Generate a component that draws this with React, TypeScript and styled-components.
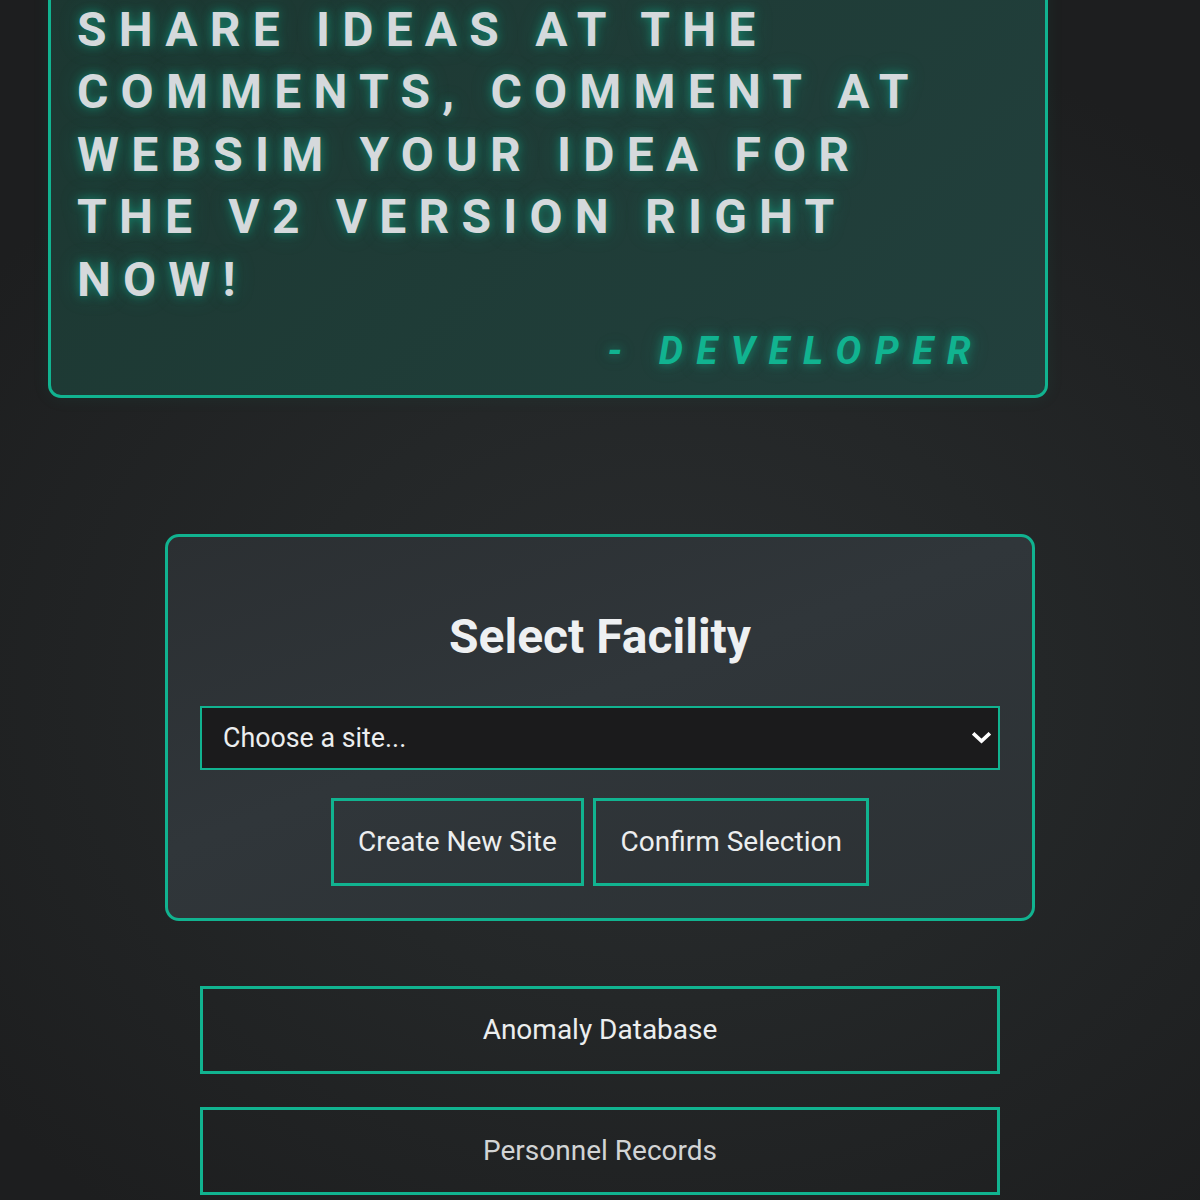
import React from "react";
import styled, { createGlobalStyle } from "styled-components";

const TEAL = "#11b390";

const Global = createGlobalStyle`
  html, body {
    margin: 0;
    padding: 0;
    background: #1f2122;
  }
  body {
    min-height: 1200px;
    font-family: Roboto, "Liberation Sans", Arial, sans-serif;
    color: #e8eaeb;
    background:
      radial-gradient(ellipse 70% 55% at 55% 55%, #2a2d2f 0%, #242728 45%, #1d1e1f 100%);
    overflow: hidden;
  }
  * { box-sizing: border-box; }
`;

const Page = styled.main`
  display: flex;
  flex-direction: column;
  align-items: center;
  padding: 0 48px 60px;
  margin-top: -30px;
`;

const QuoteCard = styled.section`
  align-self: flex-start;
  width: 1000px;
  border: 3.2px solid ${TEAL};
  border-radius: 13px;
  padding: 26px 26px 22px;
  background: linear-gradient(135deg, #1c3731 0%, #1f3c37 50%, #22403d 100%);
  box-shadow: 0 0 18px rgba(17, 179, 144, 0.08);
`;

const QuoteText = styled.p`
  margin: 0;
  font-family: Roboto, "Liberation Sans", sans-serif;
  font-weight: 700;
  font-size: 48px;
  line-height: 62.4px;
  letter-spacing: 12.2px;
  text-transform: uppercase;
  color: #d5d9dc;
  text-shadow: 0 0 10px rgba(17, 179, 144, 0.55), 0 0 22px rgba(17, 179, 144, 0.3);
  padding-right: 40px;
`;

const Signature = styled.p`
  margin: 17px 35px 0 0;
  text-align: right;
  font-family: Roboto, "Liberation Sans", sans-serif;
  font-weight: 700;
  font-style: italic;
  font-size: 38.4px;
  line-height: 45px;
  letter-spacing: 13.5px;
  text-transform: uppercase;
  color: ${TEAL};
  text-shadow: 0 0 10px rgba(17, 179, 144, 0.55), 0 0 20px rgba(17, 179, 144, 0.3);
`;

const FacilityCard = styled.section`
  margin-top: 136px;
  width: 870px;
  border: 3.2px solid ${TEAL};
  border-radius: 14px;
  padding: 32px;
  background: linear-gradient(160deg, #2b2f32 0%, #30363a 45%, #2c3134 100%);
  display: flex;
  flex-direction: column;
  align-items: stretch;
`;

const Title = styled.h2`
  margin: 39px 0 41px;
  text-align: center;
  font-family: Roboto, "Liberation Sans", sans-serif;
  font-weight: 700;
  font-size: 48px;
  line-height: normal;
  color: #eef0f2;
`;

const SelectWrap = styled.div`
  position: relative;
  width: 100%;
`;

const Select = styled.select`
  appearance: none;
  -webkit-appearance: none;
  width: 100%;
  height: 64px;
  margin: 0;
  padding: 0 50px 0 21px;
  border: 2.4px solid ${TEAL};
  border-radius: 0;
  background: #1b1b1c;
  color: #eceeef;
  font-family: Roboto, "Liberation Sans", sans-serif;
  font-size: 26.8px;
  outline: none;
`;

const Chevron = styled.svg`
  position: absolute;
  right: 9px;
  top: 50%;
  width: 19px;
  height: 12px;
  transform: translateY(-50%);
  pointer-events: none;
`;

const ButtonRow = styled.div`
  margin-top: 28px;
  display: flex;
  justify-content: center;
  gap: 9px;
`;

const OutlineButton = styled.button<{ $wide?: boolean; $dim?: boolean }>`
  display: block;
  width: ${(p) => (p.$wide ? "800px" : "auto")};
  margin: 0;
  padding: 26px 24.4px;
  border: 3.6px solid ${TEAL};
  border-radius: 0;
  background: transparent;
  color: ${(p) => (p.$dim ? "#d2d4d5" : "#eceeef")};
  font-family: Roboto, "Liberation Sans", sans-serif;
  font-size: 28px;
  line-height: 30px;
  text-align: center;
  cursor: pointer;
`;

const NavList = styled.nav`
  margin-top: 65px;
  display: flex;
  flex-direction: column;
  gap: 32.5px;
`;

export default function App() {
  return (
    <>
      <Global />
      <Page>
        <QuoteCard>
          <QuoteText>
            Share ideas at the comments, comment at websim your idea for the v2 version right now!
          </QuoteText>
          <Signature>- Developer</Signature>
        </QuoteCard>

        <FacilityCard>
          <Title>Select Facility</Title>
          <SelectWrap>
            <Select defaultValue="">
              <option value="">Choose a site...</option>
            </Select>
            <Chevron viewBox="0 0 19 12">
              <path d="M2.5 2.5 L9.5 9 L16.5 2.5" fill="none" stroke="#ffffff" strokeWidth="3.6" strokeLinecap="square" />
            </Chevron>
          </SelectWrap>
          <ButtonRow>
            <OutlineButton>Create New Site</OutlineButton>
            <OutlineButton>Confirm Selection</OutlineButton>
          </ButtonRow>
        </FacilityCard>

        <NavList>
          <OutlineButton $wide>Anomaly Database</OutlineButton>
          <OutlineButton $wide $dim>Personnel Records</OutlineButton>
        </NavList>
      </Page>
    </>
  );
}
